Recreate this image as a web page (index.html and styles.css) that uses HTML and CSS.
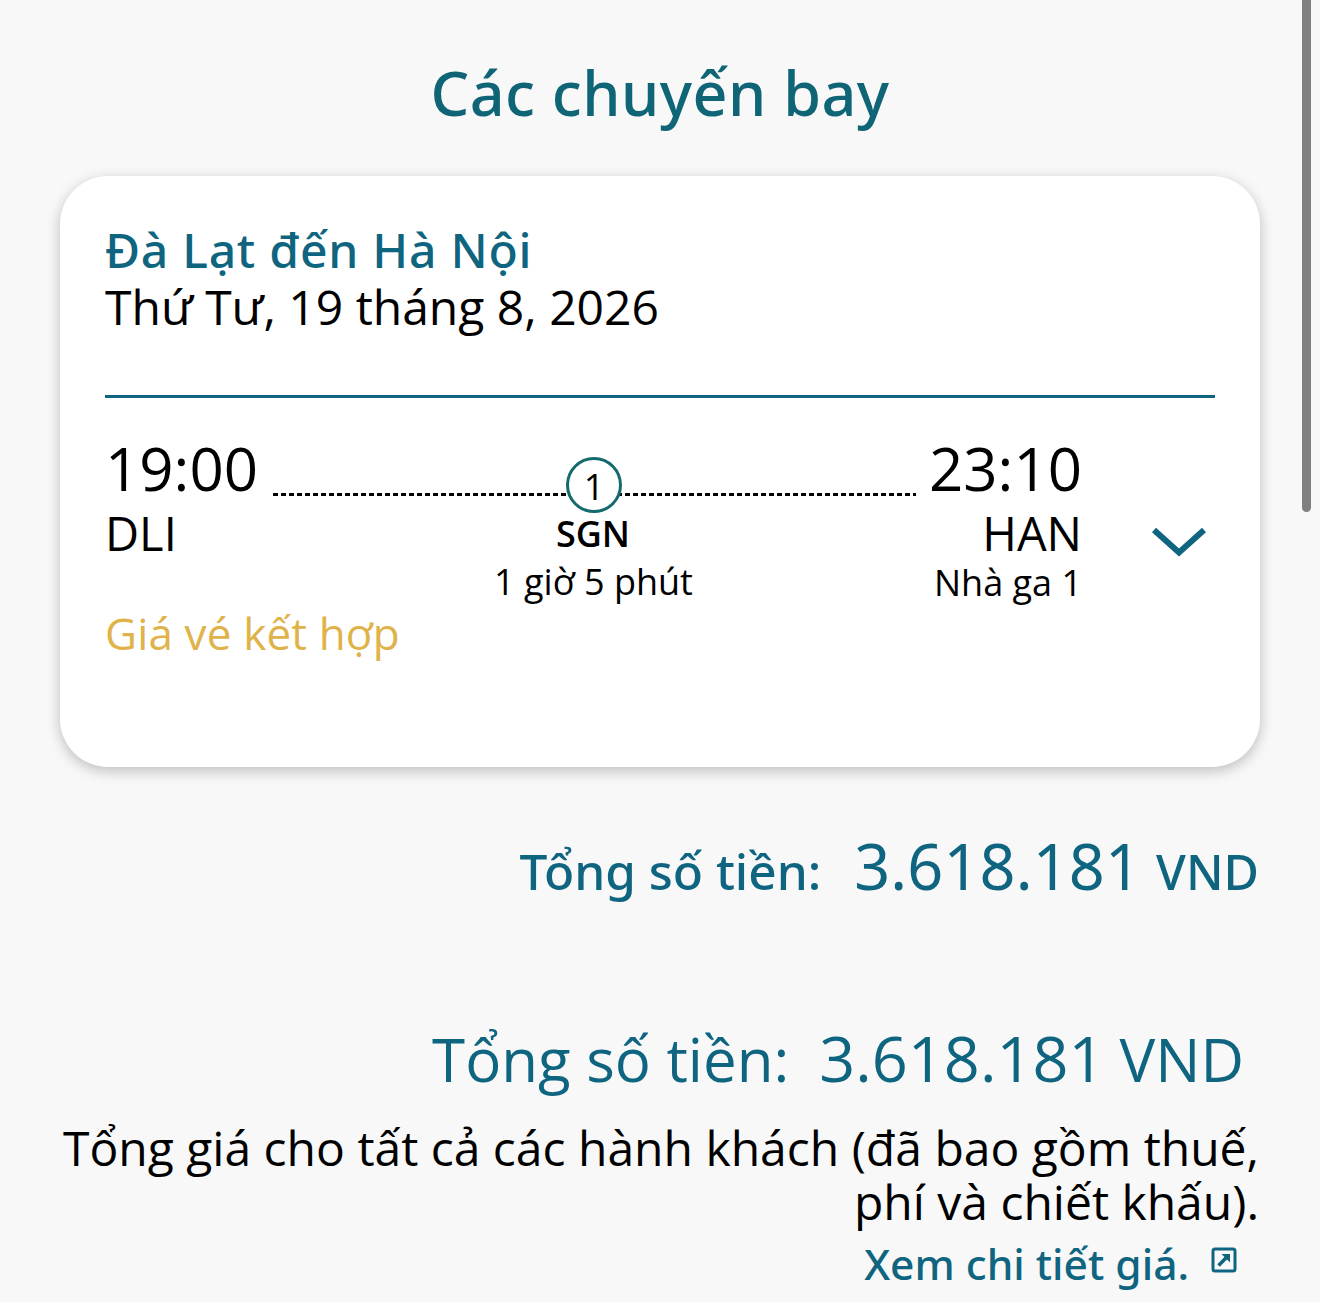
FILE: index.html
```html
<!DOCTYPE html>
<html lang="vi">
  <head>
    <meta charset="UTF-8" />
    <title>Các chuyến bay</title>
    <link rel="stylesheet" href="styles.css">
  </head>
  <body>
    <div class="scrollbar"></div>
    <main class="page">
      <h1 class="page-title">Các chuyến bay</h1>

      <section class="card">
        <h2 class="route">Đà Lạt đến Hà Nội</h2>
        <p class="date">Thứ Tư, 19 tháng 8, 2026</p>
        <hr class="divider" />

        <div class="flight">
          <div class="endpoint">
            <div class="time">19:00</div>
            <div class="code">DLI</div>
          </div>
          <div class="path">
            <div class="line"><span class="stop-count">1</span></div>
            <div class="stop-code">SGN</div>
            <div class="detail layover">1 giờ 5 phút</div>
          </div>
          <div class="endpoint endpoint-right">
            <div class="time">23:10</div>
            <div class="code">HAN</div>
            <div class="detail">Nhà ga 1</div>
          </div>
          <svg class="chevron" viewBox="0 0 56 32" width="56" height="32">
            <path d="M3 4 L28 26.5 L53 4" fill="none" stroke="#0f6580" stroke-width="6" />
          </svg>
        </div>

        <div class="fare-type">Giá vé kết hợp</div>
      </section>

      <div class="total total-small">
        <span class="total-label">Tổng số tiền:</span>
        <span class="total-amount">3.618.181</span>
        <span class="total-currency">VND</span>
      </div>

      <div class="total total-large">
        <span>Tổng số tiền:</span>
        <span class="total-amount">3.618.181</span>
        <span>VND</span>
      </div>

      <p class="note">Tổng giá cho tất cả các hành khách (đã bao gồm thuế, phí và chiết khấu).</p>

      <div class="price-link">
        <span>Xem chi tiết giá.</span>
        <svg class="link-icon" viewBox="0 0 26 26" width="26" height="26">
          <rect x="2" y="2" width="22" height="22" rx="2" fill="none" stroke="#0f6580" stroke-width="3" />
          <path d="M7.5 18.5 L16 10" fill="none" stroke="#0f6580" stroke-width="3.5" />
          <path d="M10.5 7 H19 V15.5 Z" fill="#0f6580" />
        </svg>
      </div>
    </main>
  </body>
</html>
```

FILE: styles.css
```css
html,
body {
  margin: 0;
  height: 100%;
  overflow: hidden;
}

body {
  background: #f8f8f9;
  color: #000;
  font-family: "Open Sans", "Noto Sans", sans-serif;
}

.scrollbar {
  position: absolute;
  top: -10px;
  right: 9px;
  width: 9px;
  height: 522px;
  border-radius: 5px;
  background: #808080;
}

.page {
  padding: 0 60px;
}

.page-title {
  margin: 0;
  padding-top: 52px;
  height: 176px;
  box-sizing: border-box;
  font-family: "Noto Sans", sans-serif;
  font-size: 61px;
  line-height: 82px;
  font-weight: 500;
  letter-spacing: 0.5px;
  text-align: center;
  color: #0f6575;
}

.card {
  height: 591px;
  box-sizing: border-box;
  padding: 45px;
  padding-top: 46px;
  background: #fff;
  border-radius: 48px;
  box-shadow: 0 4px 14px rgba(0, 0, 0, 0.24);
}

.route {
  margin: 0;
  font-family: "Noto Sans", sans-serif;
  font-size: 48px;
  line-height: 56px;
  font-weight: 500;
  letter-spacing: 0.75px;
  color: #0f6580;
}

.date {
  margin: 0;
  font-size: 48px;
  line-height: 58px;
}

.divider {
  margin: 59px 0 0;
  border: 0;
  height: 3px;
  background: #0f6580;
}

.flight {
  display: flex;
  margin-top: 35px;
}

.endpoint {
  flex: none;
}

.endpoint-right {
  text-align: right;
}

.time {
  margin-bottom: 2px;
  font-size: 60px;
  line-height: 70px;
}

.code {
  font-size: 47px;
  line-height: 56px;
}

.detail {
  font-size: 36px;
  line-height: 44px;
}

.layover {
  margin-top: 6px;
  margin-right: 2px;
}

.path {
  flex: 1;
  margin: 0 13px 0 15px;
  padding-top: 24px;
  text-align: center;
}

.line {
  position: relative;
  height: 57px;
}

.line::before {
  content: "";
  position: absolute;
  left: 0;
  right: 0;
  top: 36px;
  height: 3px;
  background: repeating-linear-gradient(90deg, #000 0, #000 5px, transparent 5px, transparent 8px);
}

.stop-count {
  position: absolute;
  left: calc(50% - 0.5px);
  top: 0;
  width: 50px;
  height: 50px;
  transform: translateX(-50%);
  border: 3px solid #146a6e;
  border-radius: 50%;
  background: #fff;
  font-size: 36px;
  line-height: 54px;
}

.stop-code {
  margin-right: 3px;
  font-size: 36px;
  line-height: 40px;
  font-weight: 600;
}

.chevron {
  flex: none;
  margin: 93px 8px 0 69px;
}

.fare-type {
  margin-top: 1px;
  font-size: 44px;
  line-height: 54px;
  letter-spacing: 0.15px;
  color: #e0b34a;
}

.total {
  display: flex;
  justify-content: flex-end;
  align-items: baseline;
  color: #0f6580;
}

.total-small {
  margin-top: 57px;
  padding-right: 1px;
  font-family: "Noto Sans", sans-serif;
  font-size: 49.5px;
  line-height: 84px;
  font-weight: 500;
}

.total-small .total-amount {
  margin: 0 15px 0 33px;
  font-size: 63px;
  font-weight: 400;
  letter-spacing: 0.1px;
}

.total-small .total-currency {
  font-size: 48.5px;
}

.total-large {
  margin-top: 104px;
  padding-right: 16px;
  font-size: 60px;
  line-height: 82px;
}

.total-large .total-amount {
  margin: 0 15px 0 30px;
  font-size: 63px;
}

.note {
  margin: 21px 0 0;
  padding-right: 1px;
  font-size: 48px;
  line-height: 54px;
  text-align: right;
}

.price-link {
  display: flex;
  justify-content: flex-end;
  align-items: center;
  gap: 22px;
  margin-top: 8px;
  padding-right: 23px;
  font-family: "Noto Sans", sans-serif;
  font-size: 42.5px;
  line-height: 54px;
  font-weight: 500;
  color: #0f6580;
}

.link-icon {
  margin-bottom: 8px;
}
```
